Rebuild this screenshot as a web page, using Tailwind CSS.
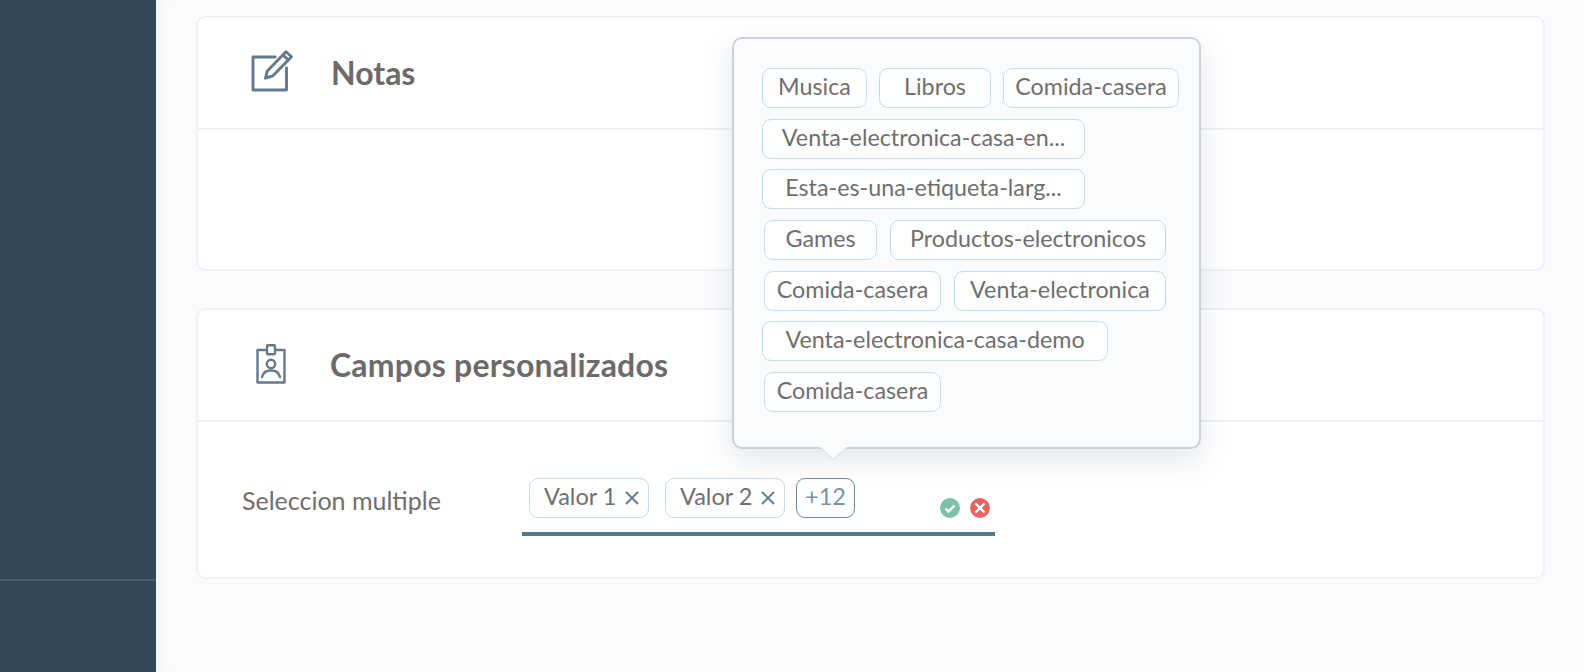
<!DOCTYPE html>
<html><head><meta charset="utf-8"><script src="https://cdn.jsdelivr.net/npm/@tailwindcss/browser@4"></script></head>
<body class="m-0 w-[1584px] h-[672px] overflow-hidden bg-[#fafbfd] font-['Lato',sans-serif] text-[#716e6e]">
<div class="relative flex h-[672px] overflow-hidden">
  <aside class="w-[156px] shrink-0 h-full bg-[#334756] pt-[579px]"><div class="h-[2px] bg-[#4c5f6d]"></div></aside>
  <main class="flex-1 pl-[40px] pr-[39px] pt-[16px] shadow-[inset_16px_0_14px_-12px_rgba(0,0,0,0.03)]">
    <section class="h-[255px] bg-white border-2 border-[#eff1f6] rounded-[9px]">
      <div class="h-[112px] border-b-2 border-[#f0f2f6] flex items-center pl-[53px]">
        <svg class="w-[42px] h-[42px] mt-[-4px]" viewBox="0 0 42 42" fill="none" stroke="#64798a" stroke-width="2.9" stroke-linecap="round" stroke-linejoin="round">
          <path d="M24 7H2v33h33.5V18"/><path d="M35 1.8l5.5 5L22 25.8l-7.5 2.4 1.8-7.2z"/><path d="M32 5l5.3 5"/>
        </svg>
        <h2 class="ml-[38px] text-[32px] font-bold leading-none mt-[-1px] text-[#6d6a6a]">Notas</h2>
      </div>
    </section>
    <section class="mt-[37px] h-[271px] bg-white border-2 border-[#eff1f6] rounded-[9px]">
      <div class="h-[112px] border-b-2 border-[#f0f2f6] flex items-center pl-[58px]">
        <svg class="w-[30px] h-[40px] mt-[-2px]" viewBox="0 0 30 40" fill="none" stroke="#64798a" stroke-width="2.4" stroke-linecap="round" stroke-linejoin="round">
          <path d="M9 6H1.5v32.5h27V6H21"/><rect x="11" y="1.2" width="8" height="9" rx="1"/><circle cx="15" cy="20" r="4.2"/><path d="M6 33c1-4.5 5-6.5 9-6.5s8 2 9 6.5"/>
        </svg>
        <h2 class="ml-[44px] text-[32px] font-bold leading-none mt-[-1px] whitespace-nowrap tracking-[0.2px] text-[#6d6a6a]">Campos personalizados</h2>
      </div>
      <div class="flex pl-[44px] pt-[56px]">
        <div class="w-[280px] text-[25px] leading-[40px] mt-[2px]">Seleccion multiple</div>
        <div class="w-[473px] h-[58px] border-b-[4px] border-[#4f7a8d] pl-[7px] flex items-start">
          <span class="h-[40px] w-[120px] border border-[#c9d9e6] rounded-[9px] text-[23.5px] pb-[3px] pl-[14px] flex items-center gap-[9px]">Valor 1 <svg class="w-[14px] h-[14px] mt-[3px]" viewBox="0 0 14 14" stroke="#64798a" stroke-width="1.8"><path d="M1 1l12 12M13 1L1 13"/></svg></span>
          <span class="ml-[16px] h-[40px] w-[120px] border border-[#c9d9e6] rounded-[9px] text-[23.5px] pb-[3px] pl-[14px] flex items-center gap-[9px]">Valor 2 <svg class="w-[14px] h-[14px] mt-[3px]" viewBox="0 0 14 14" stroke="#64798a" stroke-width="1.8"><path d="M1 1l12 12M13 1L1 13"/></svg></span>
          <span class="ml-[11px] h-[40px] w-[59px] border border-[#6b8a9c] rounded-[9px] text-[23.5px] pb-[3px] text-[#7a93a5] flex items-center justify-center">+12</span>
          <svg class="ml-[85px] mt-[20px] w-[20px] h-[20px]" viewBox="0 0 20 20"><circle cx="10" cy="10" r="10" fill="#7fc0ab"/><path d="M5.5 10.5l3 3 6-6" fill="none" stroke="#fff" stroke-width="2.4"/></svg>
          <svg class="ml-[10px] mt-[20px] w-[20px] h-[20px]" viewBox="0 0 20 20"><circle cx="10" cy="10" r="10" fill="#e56464"/><path d="M5.5 5.5l9 9M14.5 5.5l-9 9" fill="none" stroke="#fff" stroke-width="2.4"/></svg>
        </div>
      </div>
    </section>
  </main>
  <div class="absolute left-[732px] top-[37px] w-[469px] h-[412px] bg-[#fafbfd] border-2 border-[#cdd1d7] rounded-[10px] shadow-[0_10px_30px_rgba(60,70,90,0.14)] pl-[28px] pt-[29px] text-[23.3px]">
    <div class="flex flex-col gap-[10.7px]">
      <div class="flex gap-[12px]">
        <span class="h-[40px] pb-[3px] w-[105px] bg-white border border-[#c9d9e6] rounded-[9px] flex items-center justify-center">Musica</span>
        <span class="h-[40px] pb-[3px] w-[112px] bg-white border border-[#c9d9e6] rounded-[9px] flex items-center justify-center">Libros</span>
        <span class="h-[40px] pb-[3px] w-[176px] bg-white border border-[#c9d9e6] rounded-[9px] flex items-center justify-center">Comida-casera</span>
      </div>
      <div class="flex"><span class="h-[40px] pb-[3px] w-[323px] bg-white border border-[#c9d9e6] rounded-[9px] flex items-center justify-center">Venta-electronica-casa-en...</span></div>
      <div class="flex"><span class="h-[40px] pb-[3px] w-[323px] bg-white border border-[#c9d9e6] rounded-[9px] flex items-center justify-center">Esta-es-una-etiqueta-larg...</span></div>
      <div class="flex gap-[13px] ml-[2px]">
        <span class="h-[40px] pb-[3px] w-[113px] bg-white border border-[#c9d9e6] rounded-[9px] flex items-center justify-center">Games</span>
        <span class="h-[40px] pb-[3px] w-[276px] bg-white border border-[#c9d9e6] rounded-[9px] flex items-center justify-center">Productos-electronicos</span>
      </div>
      <div class="flex gap-[13px] ml-[2px]">
        <span class="h-[40px] pb-[3px] w-[177px] bg-white border border-[#c9d9e6] rounded-[9px] flex items-center justify-center">Comida-casera</span>
        <span class="h-[40px] pb-[3px] w-[212px] bg-white border border-[#c9d9e6] rounded-[9px] flex items-center justify-center">Venta-electronica</span>
      </div>
      <div class="flex"><span class="h-[40px] pb-[3px] w-[346px] bg-white border border-[#c9d9e6] rounded-[9px] flex items-center justify-center">Venta-electronica-casa-demo</span></div>
      <div class="flex ml-[2px]"><span class="h-[40px] pb-[3px] w-[177px] bg-white border border-[#c9d9e6] rounded-[9px] flex items-center justify-center">Comida-casera</span></div>
    </div>
    <svg class="absolute left-[86px] top-[408px] w-[27px] h-[13px]" viewBox="0 0 27 13"><path d="M0 0L13.5 12.5L27 0" fill="#fafbfd"/><path d="M0.5 0.5L13.5 12.5L26.5 0.5" fill="none" stroke="#d6dade" stroke-width="1"/></svg>
  </div>
</div>
</body></html>
